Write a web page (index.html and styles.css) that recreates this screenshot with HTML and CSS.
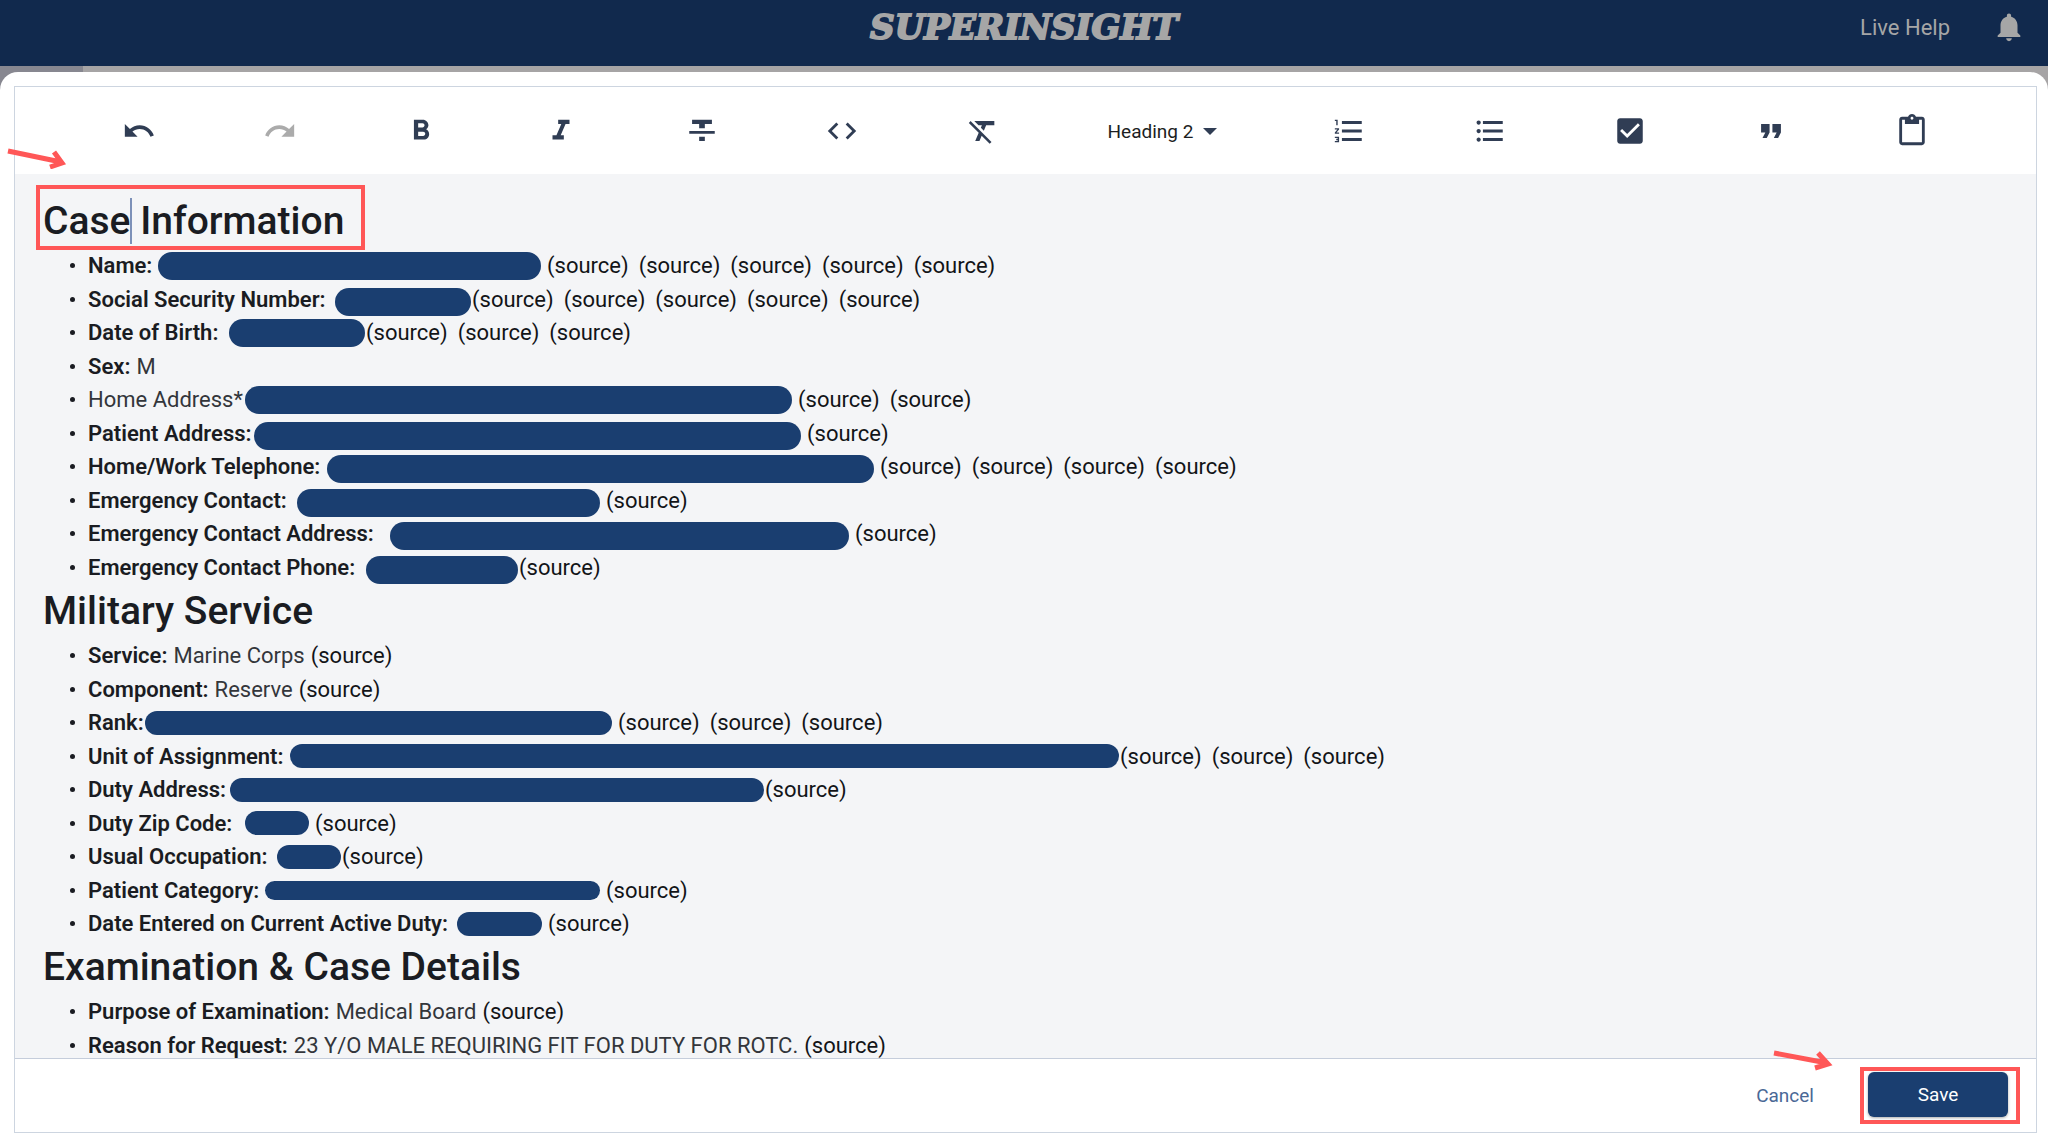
FILE: index.html
```html
<!DOCTYPE html>
<html lang="en">
<head>
<meta charset="utf-8">
<title>Superinsight</title>
<link rel="stylesheet" href="styles.css">
</head>
<body>
<header class="topbar">
  <div class="logo">SUPERINSIGHT</div>
  <nav class="topbar-actions">
    <a class="help" href="#help">Live Help</a>
    <button class="bell" type="button" aria-label="Notifications"><svg class="icon" viewBox="0 0 24 24"><path d="M12 22c1.1 0 2-.9 2-2h-4c0 1.100.9 2 2 2zm6-6v-5c0-3.070-1.640-5.640-4.500-6.320V4c0-.83-.67-1.500-1.500-1.500s-1.500.67-1.500 1.500v.68C7.630 5.360 6 7.920 6 11v5l-2 2v1h16v-1l-2-2z"/></svg></button>
  </nav>
</header>
<div class="backdrop">
<main class="modal">
  <section class="editor">
    <div class="toolbar" role="toolbar" aria-label="Formatting">
      <button class="tool" type="button" aria-label="Undo"><svg class="icon" viewBox="0 0 24 24"><path d="M12.500 8c-2.650 0-5.050.99-6.900 2.600L2 7v9h9l-3.620-3.620c1.390-1.160 3.160-1.880 5.120-1.880 3.540 0 6.550 2.310 7.600 5.500l2.370-.78C21.080 11.030 17.150 8 12.500 8z"/></svg></button>
      <button class="tool" type="button" aria-label="Redo" disabled><svg class="icon" viewBox="0 0 24 24"><path d="M18.400 10.600C16.550 8.990 14.150 8 11.500 8c-4.650 0-8.580 3.030-9.960 7.220L3.900 16c1.050-3.190 4.050-5.500 7.600-5.500 1.950 0 3.730.72 5.120 1.880L13 16h9V7l-3.600 3.600z"/></svg></button>
      <button class="tool" type="button" aria-label="Bold"><svg class="icon" viewBox="0 0 24 24"><path d="M15.600 10.790c.97-.67 1.650-1.770 1.650-2.790 0-2.260-1.750-4-4-4H7v14h7.040c2.090 0 3.710-1.700 3.710-3.790 0-1.520-.86-2.820-2.150-3.420zM10 6.500h3c.83 0 1.500.67 1.500 1.500s-.67 1.500-1.500 1.500h-3v-3zm3.500 9H10v-3h3.500c.83 0 1.500.67 1.500 1.500s-.67 1.500-1.500 1.500z"/></svg></button>
      <button class="tool" type="button" aria-label="Italic"><svg class="icon" viewBox="0 0 24 24"><path d="M10 4v3h2.210l-3.420 8H6v3h8v-3h-2.210l3.420-8H18V4z"/></svg></button>
      <button class="tool" type="button" aria-label="Strikethrough"><svg class="icon" viewBox="0 0 24 24"><path d="M10 19h4v-3h-4v3zM5 4v3h5v3h4V7h5V4H5zM3 14h18v-2H3v2z"/></svg></button>
      <button class="tool" type="button" aria-label="Code"><svg class="icon" viewBox="0 0 24 24"><path d="M9.400 16.600 4.800 12l4.600-4.600L8 6l-6 6 6 6 1.400-1.400zm5.200 0 4.600-4.600-4.600-4.600L16 6l6 6-6 6-1.400-1.400z"/></svg></button>
      <button class="tool" type="button" aria-label="Clear formatting"><svg class="icon" viewBox="0 0 24 24"><path d="M3.270 5 2 6.270l6.970 6.970L6.500 19h3l1.570-3.660L16.730 21 18 19.730 3.550 5.270 3.270 5zM6 5v.18L8.820 8h2.400l-.72 1.680 2.100 2.100L14.210 8H20V5H6z"/></svg></button>
      <div class="style-picker">
        <select class="style-select" aria-label="Text style"><option>Heading 2</option><option>Heading 1</option><option>Normal</option></select>
        <svg class="chevron" viewBox="0 0 14 7"><path d="M0 0h14L7 7z"/></svg>
      </div>
      <button class="tool" type="button" aria-label="Numbered list"><svg class="icon" viewBox="0 0 24 24"><path d="M2 17h2v.5H3v1h1v.5H2v1h3v-4H2v1zm1-9h1V4H2v1h1v3zm-1 3h1.800L2 13.100v.9h3v-1H3.200L5 10.900V10H2v1zm5-6v2h14V5H7zm0 14h14v-2H7v2zm0-6h14v-2H7v2z"/></svg></button>
      <button class="tool" type="button" aria-label="Bulleted list"><svg class="icon" viewBox="0 0 24 24"><path d="M4 10.500c-.83 0-1.500.67-1.500 1.500s.67 1.500 1.500 1.500 1.500-.67 1.500-1.500-.67-1.500-1.500-1.500zm0-6c-.83 0-1.500.67-1.500 1.500S3.170 7.500 4 7.500 5.500 6.830 5.500 6 4.830 4.500 4 4.500zm0 12c-.83 0-1.500.68-1.500 1.500s.68 1.500 1.500 1.500 1.500-.68 1.500-1.500-.67-1.500-1.500-1.500zM7 19h14v-2H7v2zm0-6h14v-2H7v2zm0-8v2h14V5H7z"/></svg></button>
      <button class="tool" type="button" aria-label="Checklist"><svg class="icon" viewBox="0 0 24 24"><path d="M19 3H5c-1.110 0-2 .9-2 2v14c0 1.100.89 2 2 2h14c1.110 0 2-.9 2-2V5c0-1.100-.89-2-2-2zm-9 14-5-5 1.410-1.410L10 14.170l7.590-7.590L19 8l-9 9z"/></svg></button>
      <button class="tool" type="button" aria-label="Quote"><svg class="icon" viewBox="0 0 24 24"><path d="M6 17h3l2-4V7H5v6h3zm8 0h3l2-4V7h-6v6h3z"/></svg></button>
      <button class="tool" type="button" aria-label="Paste"><svg class="icon" viewBox="0 0 24 24"><path d="M19 2h-4.180C14.400.84 13.300 0 12 0c-1.300 0-2.400.84-2.820 2H5c-1.100 0-2 .9-2 2v16c0 1.100.9 2 2 2h14c1.100 0 2-.9 2-2V4c0-1.100-.9-2-2-2zm-7 0c.55 0 1 .45 1 1s-.45 1-1 1-1-.45-1-1 .45-1 1-1zm7 18H5V4h2v3h10V4h2v16z"/></svg></button>
    </div>
    <article class="document">
      <h2><span class="caret-host">Case</span> Information</h2>
      <ul>
        <li><span class="field" style="width:453px"><b>Name:</b><i class="redacted" style="width:383px"></i></span><span class="sources"><a href="#s">(source)</a> <a href="#s">(source)</a> <a href="#s">(source)</a> <a href="#s">(source)</a> <a href="#s">(source)</a></span></li>
        <li><span class="field" style="width:383px"><b>Social Security Number:</b><i class="redacted low" style="width:136px"></i></span><span class="sources flush"><a href="#s">(source)</a> <a href="#s">(source)</a> <a href="#s">(source)</a> <a href="#s">(source)</a> <a href="#s">(source)</a></span></li>
        <li><span class="field" style="width:277px"><b>Date of Birth:</b><i class="redacted" style="width:136px"></i></span><span class="sources flush"><a href="#s">(source)</a> <a href="#s">(source)</a> <a href="#s">(source)</a></span></li>
        <li><b>Sex:</b> M</li>
        <li><span class="field" style="width:704px"><span>Home Address*</span><i class="redacted" style="width:547px"></i></span><span class="sources"><a href="#s">(source)</a> <a href="#s">(source)</a></span></li>
        <li><span class="field" style="width:713px"><b>Patient Address:</b><i class="redacted low" style="width:547px"></i></span><span class="sources"><a href="#s">(source)</a></span></li>
        <li><span class="field" style="width:786px"><b>Home/Work Telephone:</b><i class="redacted low" style="width:547px"></i></span><span class="sources"><a href="#s">(source)</a> <a href="#s">(source)</a> <a href="#s">(source)</a> <a href="#s">(source)</a></span></li>
        <li><span class="field" style="width:512px"><b>Emergency Contact:</b><i class="redacted low" style="width:303px"></i></span><span class="sources"><a href="#s">(source)</a></span></li>
        <li><span class="field" style="width:761px"><b>Emergency Contact Address:</b><i class="redacted low" style="width:459px"></i></span><span class="sources"><a href="#s">(source)</a></span></li>
        <li><span class="field" style="width:430px"><b>Emergency Contact Phone:</b><i class="redacted low" style="width:152px"></i></span><span class="sources flush"><a href="#s">(source)</a></span></li>
      </ul>
      <h2>Military Service</h2>
      <ul>
        <li><b>Service:</b> Marine Corps <span class="sources"><a href="#s">(source)</a></span></li>
        <li><b>Component:</b> Reserve <span class="sources"><a href="#s">(source)</a></span></li>
        <li><span class="field" style="width:524px"><b>Rank:</b><i class="redacted slim" style="width:467px"></i></span><span class="sources"><a href="#s">(source)</a> <a href="#s">(source)</a> <a href="#s">(source)</a></span></li>
        <li><span class="field" style="width:1031px"><b>Unit of Assignment:</b><i class="redacted slim" style="width:829px"></i></span><span class="sources flush"><a href="#s">(source)</a> <a href="#s">(source)</a> <a href="#s">(source)</a></span></li>
        <li><span class="field" style="width:676px"><b>Duty Address:</b><i class="redacted slim" style="width:534px"></i></span><span class="sources flush"><a href="#s">(source)</a></span></li>
        <li><span class="field" style="width:221px"><b>Duty Zip Code:</b><i class="redacted slim" style="width:64px"></i></span><span class="sources"><a href="#s">(source)</a></span></li>
        <li><span class="field" style="width:253px"><b>Usual Occupation:</b><i class="redacted slim" style="width:64px"></i></span><span class="sources flush"><a href="#s">(source)</a></span></li>
        <li><span class="field" style="width:512px"><b>Patient Category:</b><i class="redacted thin" style="width:335px"></i></span><span class="sources"><a href="#s">(source)</a></span></li>
        <li><span class="field" style="width:454px"><b>Date Entered on Current Active Duty:</b><i class="redacted slim" style="width:85px"></i></span><span class="sources"><a href="#s">(source)</a></span></li>
      </ul>
      <h2>Examination &amp; Case Details</h2>
      <ul>
        <li><b>Purpose of Examination:</b> Medical Board <span class="sources"><a href="#s">(source)</a></span></li>
        <li><b>Reason for Request:</b> 23 Y/O MALE REQUIRING FIT FOR DUTY FOR ROTC. <span class="sources"><a href="#s">(source)</a></span></li>
      </ul>
      <div class="callout-box callout-heading"></div>
    </article>
    <footer class="actions">
      <button class="cancel" type="button">Cancel</button>
      <div class="save-wrap"><button class="save" type="button">Save</button></div>
      <svg class="callout-arrow arrow-save" viewBox="0 0 60 22"><path d="M1 4 54 14M45 4 55 15 42 19"/></svg>
    </footer>
    <svg class="callout-arrow arrow-heading" viewBox="0 0 60 22"><path d="M1 4 54 15M47 5 55 16 43 20"/></svg>
  </section>
</main>
</div>
</body>
</html>
```
FILE: styles.css
```css
* { box-sizing: border-box; }

body {
  margin: 0;
  height: 100vh;
  display: flex;
  flex-direction: column;
  overflow: hidden;
  font-family: Roboto, sans-serif;
  font-size: 22px;
  color: #1a1c22;
}

button {
  border: 0;
  padding: 0;
  background: none;
  font: inherit;
  color: inherit;
}

a { color: inherit; text-decoration: none; }

.icon { display: block; width: 34px; height: 34px; fill: currentColor; }

.topbar {
  flex: none;
  height: 66px;
  padding: 0 22px 12px;
  display: grid;
  grid-template-columns: 1fr auto 1fr;
  align-items: center;
  background: #11294d;
  color: #a6a6a6;
}

.logo {
  grid-column: 2;
  font-family: "DejaVu Serif", serif;
  font-size: 34px;
  font-weight: bold;
  font-style: italic;
  line-height: 40px;
  -webkit-text-stroke: 2px #a6a6a6;
}

.topbar-actions {
  justify-self: end;
  display: flex;
  align-items: center;
  gap: 42px;
}

.backdrop {
  flex: 1;
  min-height: 0;
  padding-top: 6px;
  display: flex;
  background: linear-gradient(to right, #878790 83px, #a6a4a5 83px);
}

.modal {
  flex: 1;
  min-width: 0;
  padding: 14px 11px 1px 14px;
  display: flex;
  background: #fff;
  border-radius: 18px 18px 0 0;
}

.editor {
  position: relative;
  flex: 1;
  min-width: 0;
  display: flex;
  flex-direction: column;
  border: 1px solid #cdd5e0;
}

.toolbar {
  flex: none;
  height: 87px;
  padding: 0 54px;
  display: flex;
  align-items: center;
  justify-content: space-around;
  color: #303d54;
}

.tool { width: 44px; height: 44px; display: grid; place-items: center; }
.tool:disabled { color: #ababab; }

.style-picker {
  position: relative;
  width: 129px;
  padding: 0 8px 0 6px;
}

.style-select {
  appearance: none;
  width: 100%;
  padding: 0;
  border: 0;
  background: none;
  font-family: inherit;
  font-size: 19px;
  line-height: 24px;
  color: #1c1e22;
}

.chevron {
  position: absolute;
  right: 14px;
  top: 10px;
  width: 14px;
  height: 7px;
  fill: #303d54;
}

.document {
  position: relative;
  flex: 1;
  min-height: 0;
  padding: 20px 28px 0;
  overflow: hidden;
  background: #f4f5f7;
}

h2 {
  margin: 0;
  font-size: 39px;
  font-weight: 500;
  line-height: 55px;
}

ul { margin: 0; padding: 0; list-style: none; }

li {
  height: 33px;
  display: flex;
  align-items: center;
  gap: 6px;
  padding-left: 45px;
  position: relative;
  white-space: nowrap;
  color: #33363b;
}

li:nth-child(even) { height: 34px; }

li::before {
  content: "";
  position: absolute;
  left: 27px;
  width: 5px;
  height: 5px;
  border-radius: 50%;
  background: #1a1c22;
}

b { font-weight: 600; color: #1a1c22; }

.field { display: flex; align-items: center; justify-content: space-between; }
.field + .flush { margin-left: -5px; }

.redacted {
  height: 28px;
  border-radius: 14px;
  background: #1a3e70;
}

.redacted.low { margin-top: 5px; }
.redacted.slim { height: 24px; }
.redacted.thin { height: 19px; }

.sources { display: flex; gap: 10px; color: #121417; }

.caret-host { border-right: 2px solid #7c90b8; margin-right: -2px; }

.actions {
  position: relative;
  flex: none;
  height: 74px;
  padding-right: 16px;
  display: flex;
  align-items: center;
  justify-content: flex-end;
  gap: 46px;
  border-top: 1px solid #c5cddb;
  font-size: 19px;
}

.cancel { color: #4a6896; }

.save-wrap { padding: 1px 8px 3px 4px; border: 4px solid #ff5757; }

.save {
  display: block;
  width: 140px;
  height: 45px;
  border-radius: 6px;
  background: #1a3e70;
  color: #fff;
  box-shadow: 0 1px 3px #0005;
}

.callout-box { position: absolute; border: 4px solid #ff5757; }
.callout-heading { left: 21px; top: 11px; width: 329px; height: 65px; }

.callout-arrow {
  position: absolute;
  width: 60px;
  height: 22px;
  fill: none;
  stroke: #ff5757;
  stroke-width: 5px;
}

.arrow-heading { left: -8px; top: 60px; }
.arrow-save { right: 203px; top: -10px; }
```
